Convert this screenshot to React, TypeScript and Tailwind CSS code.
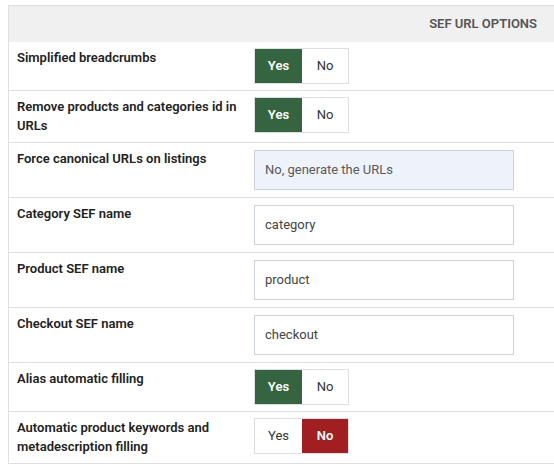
type Row =
  | { label: string; kind: "toggle"; value: boolean }
  | { label: string; kind: "select"; value: string }
  | { label: string; kind: "input"; value: string };

const rows: Row[] = [
  { label: "Simplified breadcrumbs", kind: "toggle", value: true },
  { label: "Remove products and categories id in URLs", kind: "toggle", value: true },
  { label: "Force canonical URLs on listings", kind: "select", value: "No, generate the URLs" },
  { label: "Category SEF name", kind: "input", value: "category" },
  { label: "Product SEF name", kind: "input", value: "product" },
  { label: "Checkout SEF name", kind: "input", value: "checkout" },
  { label: "Alias automatic filling", kind: "toggle", value: true },
  { label: "Automatic product keywords and metadescription filling", kind: "toggle", value: false },
];

function Toggle({ value }: { value: boolean }) {
  return (
    <div className="flex h-[36px] w-[95px] border border-[#dcdfe3] text-[13px]">
      <div
        className={`flex w-[47px] items-center justify-center ${
          value ? "bg-[#356441] font-semibold text-white" : "bg-white text-[#333]"
        }`}
      >
        Yes
      </div>
      <div
        className={`flex flex-1 items-center justify-center ${
          !value ? "bg-[#a11f20] font-semibold text-white" : "bg-white text-[#333]"
        }`}
      >
        No
      </div>
    </div>
  );
}

function Control({ row }: { row: Row }) {
  if (row.kind === "toggle") return <Toggle value={row.value} />;
  if (row.kind === "select") {
    return (
      <div className="flex h-[40px] w-[260px] items-center border border-[#cdd3da] bg-[#eef3fb] pl-[10px] text-[13px] text-[#5a5a5a]">
        {row.value}
      </div>
    );
  }
  return (
    <div className="flex h-[40px] w-[260px] items-center border border-[#cdd3da] bg-white pl-[10px] text-[13px] text-[#444]">
      {row.value}
    </div>
  );
}

export default function App() {
  return (
    <div
      className="h-[470px] w-[554px] overflow-hidden bg-white pl-[8px] pt-[5px]"
      style={{ fontFamily: "Roboto, 'Liberation Sans', sans-serif" }}
    >
      <div className="w-[560px] border-l border-t border-b border-[#dcdfe3]">
        {/* HEADER */}
        <div className="flex h-[36px] items-center justify-end bg-[#f0f0f0] pr-[31px] text-[13px] font-semibold text-[#555]">
          SEF URL OPTIONS
        </div>

        {rows.map((row, i) => (
          <div
            key={row.label}
            className={`flex ${i > 0 ? "border-t border-[#dcdfe3]" : ""}`}
          >
            <div className="w-[237px] shrink-0 pl-[8px] pr-[2px] pt-[6px] pb-[7px] text-[13px] font-semibold leading-[19px] text-[#222]">
              {row.label}
            </div>
            <div
              className={`flex-1 pl-[8px] ${
                row.kind === "toggle" ? "py-[6px]" : "py-[7px]"
              }`}
            >
              <Control row={row} />
            </div>
          </div>
        ))}
      </div>
    </div>
  );
}
